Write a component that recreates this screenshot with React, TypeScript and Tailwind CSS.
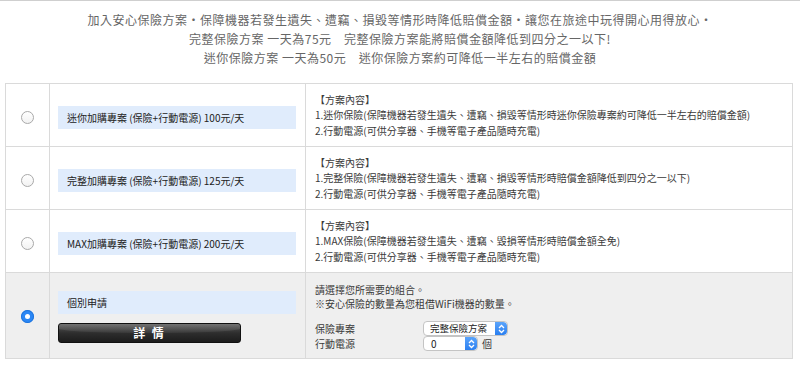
import React from "react";

const font = { fontFamily: '"Noto Sans CJK TC", "Noto Sans", sans-serif' };

function Radio({ checked }: { checked?: boolean }) {
  if (checked) {
    return (
      <div className="w-[13px] h-[13px] rounded-full bg-[#2b87f5] flex items-center justify-center shadow-[inset_0_0_0_1px_#1e74dc]">
        <div className="w-[5px] h-[5px] rounded-full bg-white" />
      </div>
    );
  }
  return (
    <div className="w-[13px] h-[13px] rounded-full border border-[#a9a9a9] bg-gradient-to-b from-white to-[#f2f2f2]" />
  );
}

function Label({ text }: { text: string }) {
  return (
    <div className="w-[238px] h-[23px] bg-[#e0ecfc] flex items-center pl-[9px] text-[10px] text-[#222]">
      {text}
    </div>
  );
}

function Desc({ lines }: { lines: string[] }) {
  return (
    <div className="text-[10px] leading-[15.5px] text-[#3a3a3a]">
      {lines.map((l, i) => (
        <div key={i}>{l}</div>
      ))}
    </div>
  );
}

function Stepper() {
  return (
    <div className="w-[12px] self-stretch bg-gradient-to-b from-[#5aa4fb] to-[#2a7ff0] rounded-r-[4px] flex items-center justify-center">
      <svg width="7" height="10" viewBox="0 0 7 10">
        <path d="M1 4 L3.5 1.5 L6 4" stroke="white" strokeWidth="1.3" fill="none" />
        <path d="M1 6 L3.5 8.5 L6 6" stroke="white" strokeWidth="1.3" fill="none" />
      </svg>
    </div>
  );
}

export default function App() {
  const rows = [
    {
      label: "迷你加購專案 (保險+行動電源) 100元/天",
      desc: [
        "【方案內容】",
        "1.迷你保險(保障機器若發生遺失、遭竊、損毀等情形時迷你保險專案約可降低一半左右的賠償金額)",
        "2.行動電源(可供分享器、手機等電子產品隨時充電)",
      ],
    },
    {
      label: "完整加購專案 (保險+行動電源) 125元/天",
      desc: [
        "【方案內容】",
        "1.完整保險(保障機器若發生遺失、遭竊、損毀等情形時賠償金額降低到四分之一以下)",
        "2.行動電源(可供分享器、手機等電子產品隨時充電)",
      ],
    },
    {
      label: "MAX加購專案 (保險+行動電源) 200元/天",
      desc: [
        "【方案內容】",
        "1.MAX保險(保障機器若發生遺失、遭竊、毀損等情形時賠償金額全免)",
        "2.行動電源(可供分享器、手機等電子產品隨時充電)",
      ],
    },
  ];

  return (
    <div style={font} className="w-[800px] h-[369px] bg-white border-t border-[#cfcfcf] overflow-hidden">
      <div className="pt-[9px] text-center text-[12px] leading-[19px] tracking-[0.5px] text-[#666]">
        <div>加入安心保險方案・保障機器若發生遺失、遭竊、損毀等情形時降低賠償金額・讓您在旅途中玩得開心用得放心・</div>
        <div>完整保險方案 一天為75元　完整保險方案能將賠償金額降低到四分之一以下!</div>
        <div>迷你保險方案 一天為50元　迷你保險方案約可降低一半左右的賠償金額</div>
      </div>

      <div className="ml-[5px] mt-[16px] w-[788px] border border-[#dadada]">
        {rows.map((r, i) => (
          <div key={i} className="flex h-[63px] bg-white border-b border-[#dadada]">
            <div className="w-[44px] shrink-0 border-r border-[#dadada] flex items-center justify-center pt-[4px]">
              <Radio />
            </div>
            <div className="w-[256px] shrink-0 border-r border-[#dadada] flex items-center pl-[8px] pt-[4px]">
              <Label text={r.label} />
            </div>
            <div className="flex-1 flex items-center pl-[9px]">
              <Desc lines={r.desc} />
            </div>
          </div>
        ))}

        <div className="flex h-[85px] bg-[#efefef]">
          <div className="w-[44px] shrink-0 border-r border-[#dadada] flex items-center justify-center pt-[2px]">
            <Radio checked />
          </div>
          <div className="w-[256px] shrink-0 border-r border-[#dadada] flex flex-col justify-center pl-[8px] gap-[9px] pt-[2px]">
            <Label text="個別申請" />
            <div className="w-[183px] h-[20px] rounded-[3px] border border-[#111] bg-gradient-to-b from-[#5a5a5a] via-[#2e2e2e] to-[#1c1c1c] flex items-center justify-center relative overflow-hidden">
              <div className="absolute left-0 top-0 w-full h-[9px] bg-gradient-to-b from-white/15 to-white/5 rounded-b-[50%]" />
              <span className="relative text-white text-[12px] font-bold tracking-[2px]">詳 情</span>
            </div>
          </div>
          <div className="flex-1 pl-[9px] pt-[10px] text-[10px] text-[#3a3a3a]">
            <div className="leading-[14px]">請選擇您所需要的組合。</div>
            <div className="leading-[14px]">※安心保險的數量為您租借WiFi機器的數量。</div>
            <div className="mt-[10px] flex items-center h-[15px]">
              <div className="w-[108px]">保險專案</div>
              <div className="w-[85px] h-[15px] bg-white border border-[#c4c4c4] rounded-[4px] flex overflow-hidden">
                <div className="flex-1 pl-[6px] text-[9.5px] leading-[13px] text-[#222]">完整保險方案</div>
                <Stepper />
              </div>
            </div>
            <div className="flex items-center h-[15px]">
              <div className="w-[108px]">行動電源</div>
              <div className="w-[55px] h-[15px] bg-white border border-[#c4c4c4] rounded-[4px] flex overflow-hidden">
                <div className="flex-1 pl-[7px] text-[10px] leading-[13px] text-[#222]">0</div>
                <Stepper />
              </div>
              <span className="ml-[4px]">個</span>
            </div>
          </div>
        </div>
      </div>
    </div>
  );
}
